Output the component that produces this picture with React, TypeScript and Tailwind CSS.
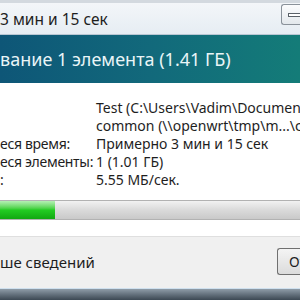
import React from "react";

const rows: { label: string; value: string }[] = [
  { label: "", value: "Test (C:\\Users\\Vadim\\Documents\\Test)" },
  { label: "", value: "common (\\\\openwrt\\tmp\\m...\\common)" },
  { label: "еся время:", value: "Примерно 3 мин и 15 сек" },
  { label: "еся элементы:", value: "1 (1.01 ГБ)" },
  { label: ":", value: "5.55 МБ/сек." },
];

export default function App() {
  return (
    <div
      className="w-[300px] h-[300px] overflow-hidden bg-white flex flex-col text-[#1e1e1e]"
      style={{ fontFamily: '"Noto Sans", "Open Sans", sans-serif' }}
    >
      {/* window caption */}
      <div className="h-[3px] bg-[#d3d9df] shrink-0" />
      <div className="h-[32px] shrink-0 flex items-start justify-between bg-gradient-to-b from-[#f3f6f9] to-[#e6edf3] border-b border-[#b9c7d3]">
        <span className="mt-[7px] text-[15.5px] leading-[18px] whitespace-nowrap">3 мин и 15 сек</span>
        <div className="mt-[1px] w-[19px] h-[21px] border border-[#8a929a] border-r-0 rounded-l-[3px] bg-gradient-to-b from-[#fbfcfd] to-[#e3e8ec] flex items-center pl-[6px]">
          <div className="w-[13px] h-[4px] shrink-0 border border-[#5a6168] bg-white" />
        </div>
      </div>

      {/* banner */}
      <div className="h-[48px] shrink-0 flex items-center bg-gradient-to-r from-[#0e5677] via-[#12697b] to-[#147c78]">
        <span className="text-[18px] leading-[22px] text-[#e9f5f7] whitespace-nowrap">вание 1 элемента (1.41 ГБ)</span>
      </div>

      {/* details */}
      <div className="pt-[16px] flex flex-col text-[14px] leading-[18px]">
        {rows.map((r, i) => (
          <div key={i} className="flex whitespace-nowrap">
            <span className="w-[96px] shrink-0 tracking-[-0.3px]">{r.label}</span>
            <span>{r.value}</span>
          </div>
        ))}
      </div>

      {/* progress */}
      <div className="mt-[11px] h-[20px] shrink-0 flex border-y border-[#b2b2b2] bg-gradient-to-b from-[#f2f2f2] via-[#dadada] to-[#c9c9c9]">
        <div className="w-[55px] h-full bg-gradient-to-b from-[#b4f0b4] via-[#22cc22] to-[#10a810]" />
      </div>

      <div className="h-[16px] shrink-0 bg-white" />

      {/* footer */}
      <div className="flex-1 flex flex-col bg-[#f0f0f0] border-t border-[#dfdfdf]">
        <div className="h-[51px] flex items-center justify-between">
          <span className="text-[15px] leading-[18px] whitespace-nowrap -mt-[2px]">ше сведений</span>
          <div className="w-[23px] h-[27px] -mt-[3px] border border-[#707070] border-r-0 rounded-l-[3px] bg-gradient-to-b from-[#f4f4f4] to-[#dcdcdc] flex items-center pl-[11px] text-[14px] overflow-hidden">
            <span>Отмена</span>
          </div>
        </div>
        <div className="h-[1px] bg-[#cfe0ee]" />
        <div className="flex-1 bg-gradient-to-b from-[#8f9ca8] to-[#3c4853]" />
      </div>
    </div>
  );
}
